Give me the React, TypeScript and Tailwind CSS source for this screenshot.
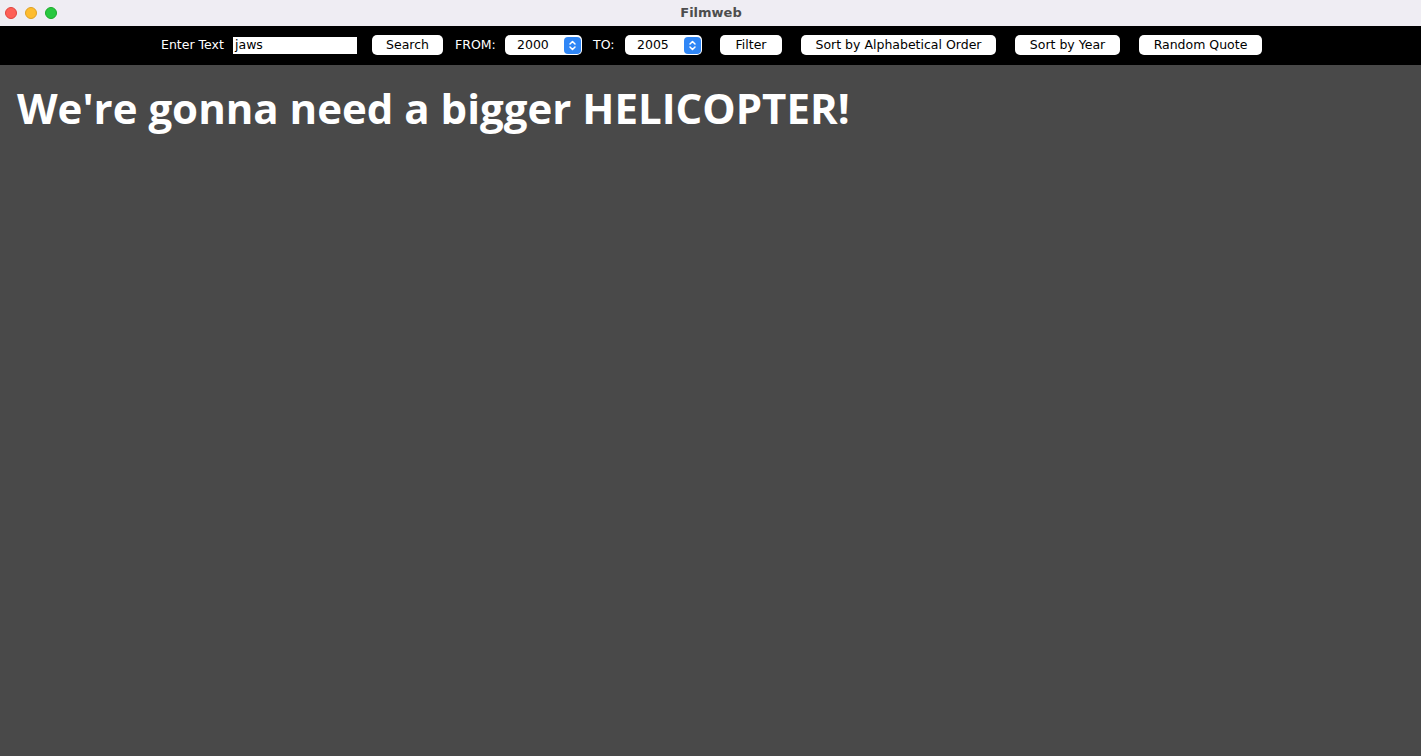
import React from "react";

const ui = { fontFamily: '"DejaVu Sans", "Liberation Sans", sans-serif' };

function Btn({ label, w, ml }: { label: string; w: string; ml: string }) {
  return (
    <div
      className={`${w} ${ml} h-[20px] bg-white rounded-[5px] flex items-center justify-center text-[12.5px] text-black leading-none`}
    >
      {label}
    </div>
  );
}

function Spinner({ value, ml }: { value: string; ml: string }) {
  return (
    <div className={`${ml} w-[77px] h-[20px] bg-white rounded-[5px] flex items-center justify-between pl-[12px] pr-[1px]`}>
      <span className="text-[12.5px] text-black leading-none">{value}</span>
      <div className="w-[17px] h-[17px] bg-[#2f86f6] rounded-[4px] flex items-center justify-center">
        <svg width="9" height="13" viewBox="0 0 9 13" fill="none" stroke="white" strokeWidth="1.5" strokeLinecap="round" strokeLinejoin="round">
          <path d="M2 5 L4.5 2.5 L7 5" />
          <path d="M2 8 L4.5 10.5 L7 8" />
        </svg>
      </div>
    </div>
  );
}

export default function App() {
  return (
    <div className="w-[1421px] h-[756px] flex flex-col bg-[#494949] overflow-hidden" style={ui}>
      <div className="h-[26px] bg-[#efedf3] flex items-center relative shrink-0">
        <div className="flex items-center gap-[8px] pl-[5px]">
          <div className="w-[12px] h-[12px] rounded-full bg-[#fe5f57] border border-[#e0443e]" />
          <div className="w-[12px] h-[12px] rounded-full bg-[#febc2e] border border-[#dea123]" />
          <div className="w-[12px] h-[12px] rounded-full bg-[#28c840] border border-[#1aab29]" />
        </div>
        <div className="absolute inset-0 flex items-center justify-center pl-[1px] pb-[1px] text-[13px] font-bold text-[#4d4d4d]">
          Filmweb
        </div>
      </div>
      <div className="h-[39px] bg-black flex items-center shrink-0 pl-[161px] pb-[1px]">
        <span className="w-[64px] text-[12.5px] text-white leading-none whitespace-nowrap">Enter Text</span>
        <div className="ml-[8px] w-[124px] h-[17px] bg-white flex items-center pl-[2px] text-[12.5px] text-black leading-none">
          jaws
        </div>
        <Btn label="Search" w="w-[71px]" ml="ml-[15px]" />
        <span className="ml-[12px] w-[39px] text-[12.5px] text-white leading-none">FROM:</span>
        <Spinner value="2000" ml="ml-[11px]" />
        <span className="ml-[11px] w-[21px] text-[12.5px] text-white leading-none">TO:</span>
        <Spinner value="2005" ml="ml-[11px]" />
        <Btn label="Filter" w="w-[62px]" ml="ml-[18px]" />
        <Btn label="Sort by Alphabetical Order" w="w-[195px]" ml="ml-[19px]" />
        <Btn label="Sort by Year" w="w-[105px]" ml="ml-[19px]" />
        <Btn label="Random Quote" w="w-[123px]" ml="ml-[19px]" />
      </div>
      <div className="flex-1 pl-[17px] pt-[16px]">
        <h1
          className="text-[42px] font-bold text-white leading-[54px] whitespace-nowrap"
          style={{ fontFamily: '"Open Sans", "DejaVu Sans", sans-serif' }}
        >
          We're gonna need a bigger HELICOPTER!
        </h1>
      </div>
    </div>
  );
}
